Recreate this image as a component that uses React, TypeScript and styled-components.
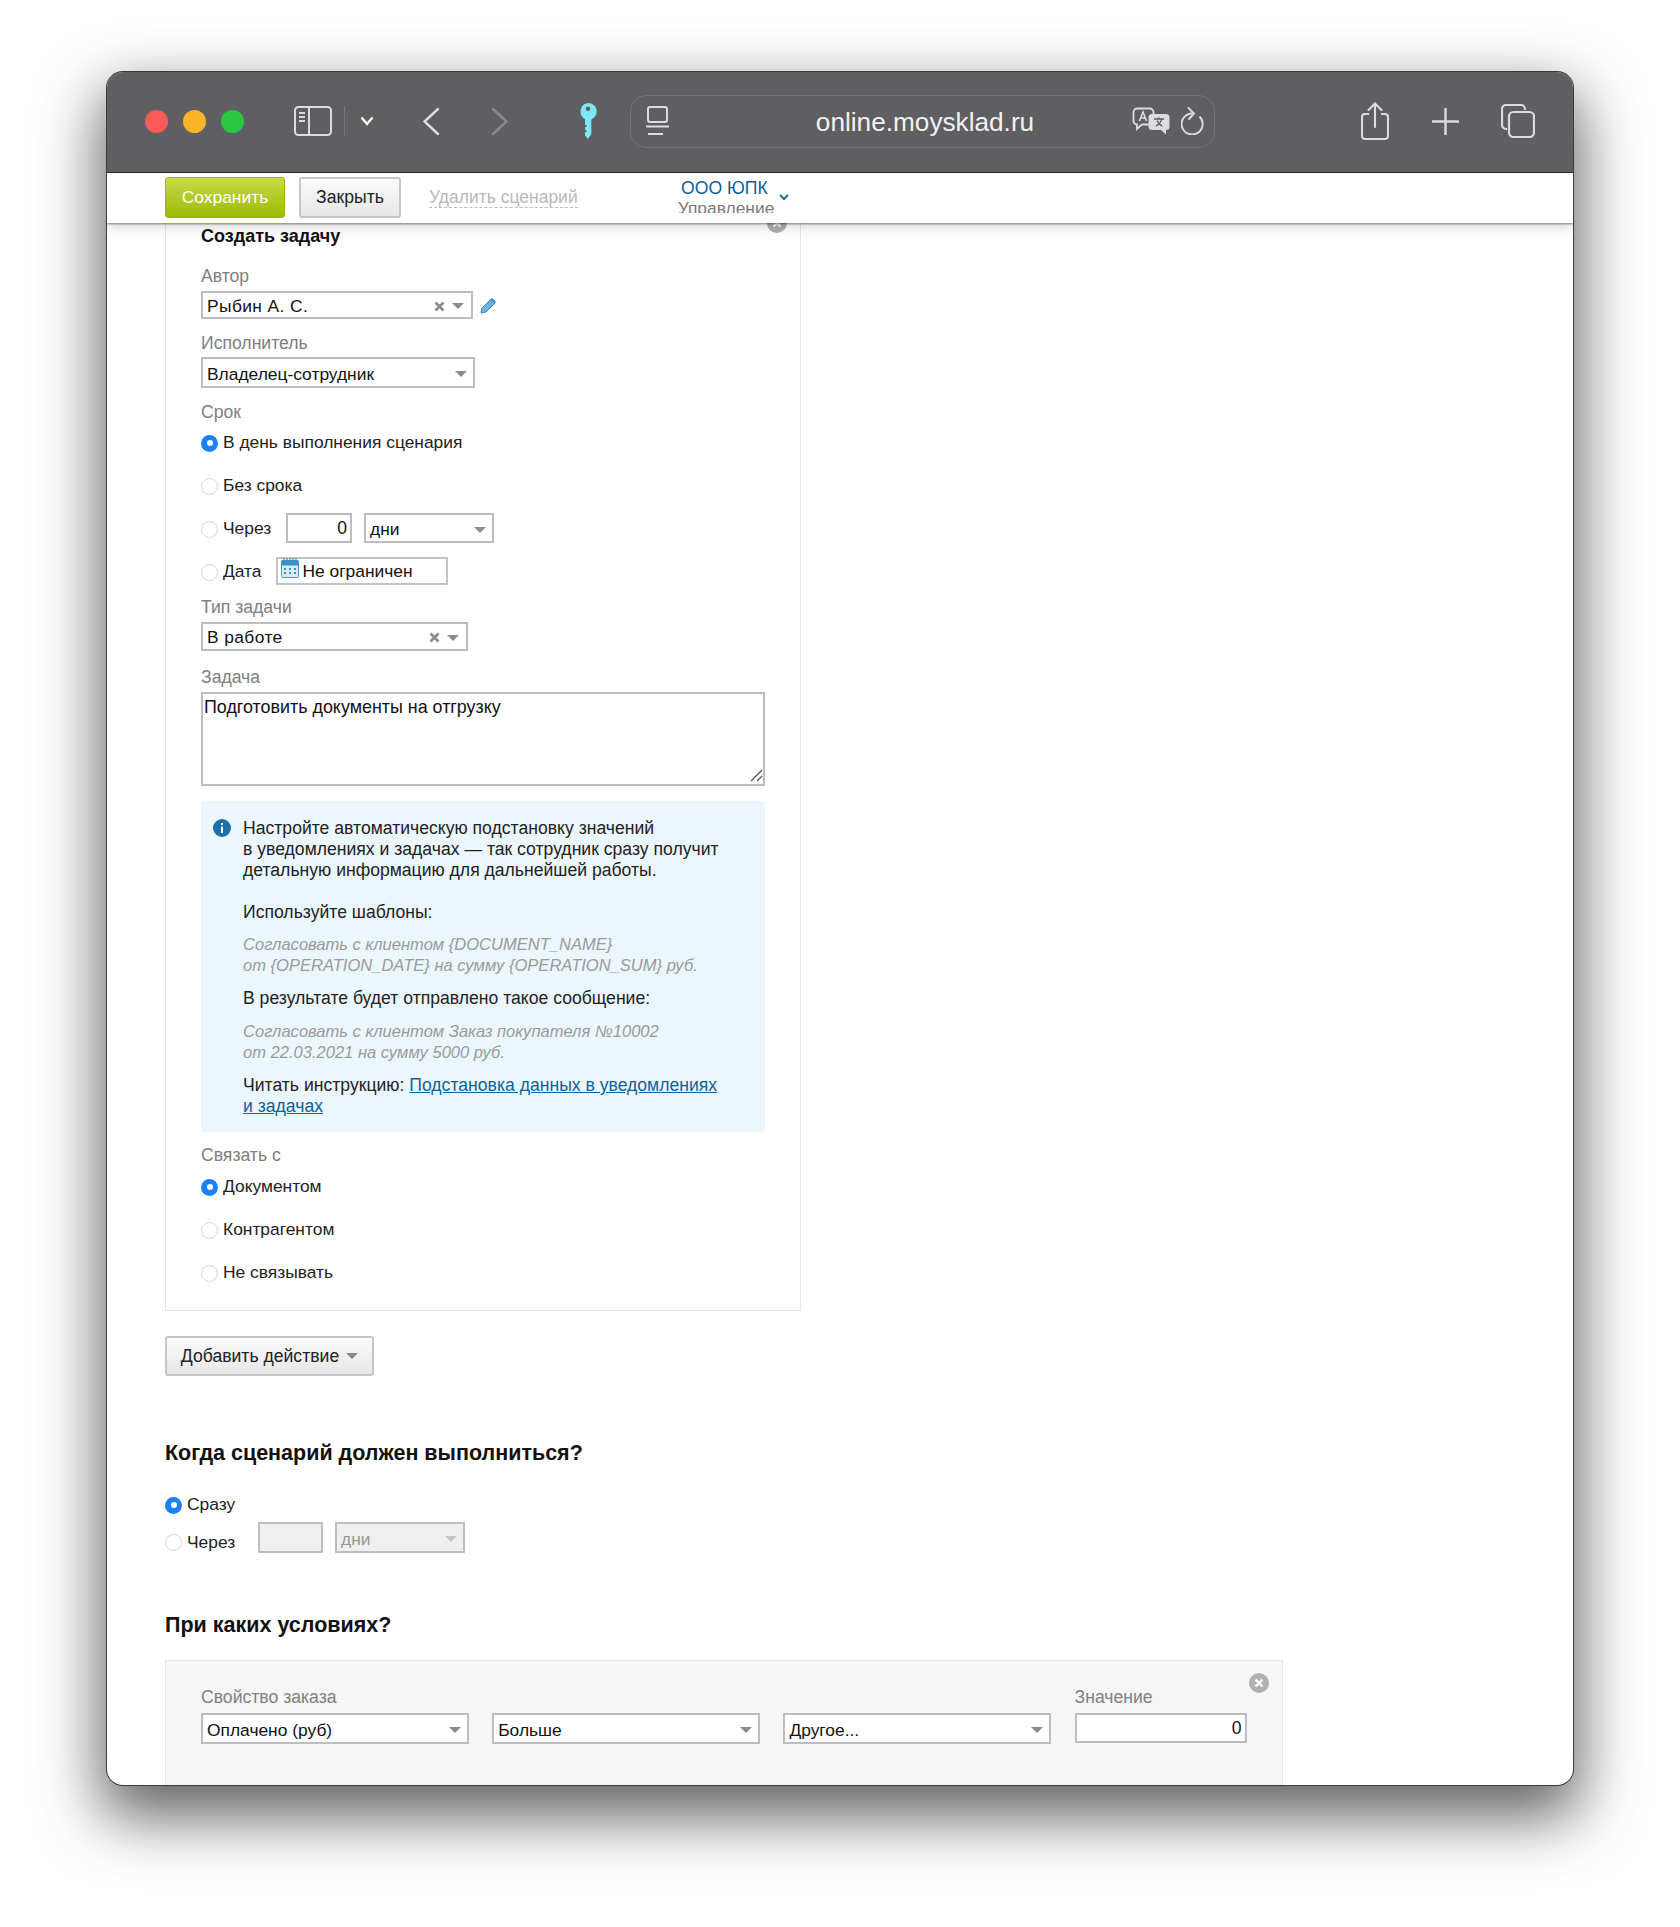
import React from 'react';
import styled, { createGlobalStyle } from 'styled-components';

const GlobalStyle = createGlobalStyle`
  html, body {
    margin: 0;
    background: #fff;
  }
  body {
    font-family: "Liberation Sans", Arial, sans-serif;
    font-size: 17.4px;
    color: #222;
  }
  * {
    box-sizing: border-box;
  }
`;

const Stage = styled('div')`
  width: 1680px;
  height: 1927px;
  padding: 72px 107px 0;
  overflow: hidden;
`;

const Browser = styled('div')`
  width: 1466px;
  height: 1713px;
  border-radius: 16px;
  overflow: hidden;
  display: flex;
  flex-direction: column;
  background: #fff;
  box-shadow: 0 0 0 1px #3a3a3a, 0 26px 62px 6px rgba(0, 0, 0, 0.62);
`;

const TitleBar = styled('div')`
  height: 101px;
  flex: 0 0 auto;
  display: flex;
  align-items: center;
  padding: 0 36px 2px 38px;
  background: #5f5f62;
  border-bottom: 1px solid #2e2e30;
`;

const Light = styled('span')<{ $color: string }>`
  width: 23px;
  height: 23px;
  border-radius: 50%;
  margin-right: 15px;
  background: ${(p) => p.$color};
`;

const ToolIcon = styled('svg')<{ $left: number }>`
  flex: 0 0 auto;
  display: block;
  margin-left: ${(p) => p.$left}px;
  color: #dcdcde;
`;

const Divider = styled('span')`
  width: 1px;
  height: 30px;
  margin-left: 12px;
  background: #77777a;
`;

const AddressBar = styled('div')`
  width: 585px;
  height: 53px;
  margin-left: 33px;
  display: flex;
  align-items: center;
  padding: 0 9px 0 14px;
  border: 1px solid #737376;
  border-radius: 16px;
`;

const Url = styled('div')`
  flex: 1;
  padding: 2px 0 0 48px;
  text-align: center;
  font-size: 26.2px;
  color: #f2f2f2;
`;

const ActionBar = styled('div')`
  position: relative;
  z-index: 2;
  height: 50px;
  flex: 0 0 auto;
  display: flex;
  align-items: center;
  padding: 0 0 1px 58px;
  background: #fff;
  box-shadow: 0 1px 2px rgba(0, 0, 0, 0.45), 0 4px 12px rgba(0, 0, 0, 0.16);
`;

const SaveButton = styled('button')`
  width: 120px;
  height: 41px;
  padding: 0;
  border: 1px solid #9db40f;
  border-radius: 3px;
  background: linear-gradient(#c5da4a, #9fba05);
  color: #fff;
  font: 17.4px "Liberation Sans", Arial, sans-serif;
`;

const GreyButton = styled('button')<{ $w: number; $ml: number; $h: number; $mt?: number }>`
  width: ${(p) => p.$w}px;
  height: ${(p) => p.$h}px;
  margin: ${(p) => p.$mt || 0}px 0 0 ${(p) => p.$ml}px;
  padding: 0;
  display: flex;
  align-items: center;
  justify-content: center;
  gap: 7px;
  border: 2px solid #c6c6c6;
  border-radius: 3px;
  background: linear-gradient(#fbfbfb, #e7e7e7);
  color: #222;
  font: 17.6px "Liberation Sans", Arial, sans-serif;
`;

const DashedLink = styled('span')`
  margin-left: 28px;
  color: #b9b9b9;
  font-size: 17.5px;
  line-height: 20px;
  border-bottom: 1px dashed #bbb;
`;

const Account = styled('div')`
  position: relative;
  align-self: flex-start;
  width: 111px;
  height: 40px;
  margin-left: 100px;
  padding-top: 5px;
  overflow: hidden;
  text-align: right;
  line-height: 20px;
`;

const AccountName = styled('div')`
  padding-right: 21px;
  color: #0d5f96;
  font-size: 17.6px;
`;

const AccountSub = styled('div')`
  padding-right: 21px;
  color: #7a7a7a;
  font-size: 17.4px;
`;

const Caret = styled('span')<{ $color?: string }>`
  display: inline-block;
  flex: 0 0 auto;
  width: 0;
  height: 0;
  border-left: 6px solid transparent;
  border-right: 6px solid transparent;
  border-top: 6px solid ${(p) => p.$color || '#8b8b8b'};
`;

const AccountCaret = styled('svg')`
  position: absolute;
  right: 0;
  top: 21px;
`;

const Content = styled('div')`
  flex: 1;
  min-height: 0;
  overflow: hidden;
  padding-left: 58px;
`;

const Panel = styled('div')`
  position: relative;
  width: 636px;
  height: 1088px;
  padding: 3px 35px 0;
  border: 1px solid #e6e6e6;
  border-top: none;
`;

const CloseBadge = styled('span')<{ $top: number; $right: number }>`
  position: absolute;
  right: ${(p) => p.$right}px;
  top: ${(p) => p.$top}px;
  width: 20px;
  height: 20px;
  border-radius: 50%;
  background: #b0b0b0;
  display: flex;
  align-items: center;
  justify-content: center;
`;

const PanelTitle = styled('div')`
  font-size: 18px;
  font-weight: bold;
  line-height: 20px;
  color: #111;
`;

const Label = styled('div')<{ $mt: number }>`
  margin-top: ${(p) => p.$mt}px;
  line-height: 20px;
  font-size: 17.6px;
  color: #808080;
`;

const Inline = styled('div')<{ $mt: number; $gap?: number }>`
  display: flex;
  align-items: center;
  margin-top: ${(p) => p.$mt}px;
  gap: ${(p) => p.$gap || 0}px;
`;

const Select = styled('div')<{ $w: number; $h: number; $ml?: number; $disabled?: boolean; $spaced?: boolean }>`
  width: ${(p) => p.$w}px;
  height: ${(p) => p.$h}px;
  margin-left: ${(p) => p.$ml || 0}px;
  flex: 0 0 auto;
  display: flex;
  align-items: center;
  padding: ${(p) => (p.$spaced ? '2px 7px 0 4px' : '3px 6px 0 4px')};
  border: 2px solid #bdbdbd;
  background: ${(p) => (p.$disabled ? '#efefef' : '#fff')};
  color: ${(p) => (p.$disabled ? '#999' : '#111')};
  font-size: 17.4px;
  letter-spacing: ${(p) => (p.$spaced ? '0.4px' : '0')};
`;

const SelectValue = styled('span')`
  flex: 1;
  white-space: nowrap;
`;

const ClearIcon = styled('svg')`
  margin-right: 7px;
  flex: 0 0 auto;
`;

const NumberBox = styled('div')<{ $w: number; $h: number; $disabled?: boolean }>`
  width: ${(p) => p.$w}px;
  height: ${(p) => p.$h}px;
  flex: 0 0 auto;
  padding: 0 3px;
  border: 2px solid #bdbdbd;
  background: ${(p) => (p.$disabled ? '#efefef' : '#fff')};
  text-align: right;
  font-size: 17.6px;
  line-height: 26px;
  color: #111;
`;

const DateBox = styled('div')`
  width: 172px;
  height: 28px;
  margin-left: 14px;
  display: flex;
  align-items: center;
  gap: 4px;
  padding-left: 3px;
  border: 2px solid #c3c3c3;
  font-size: 17.4px;
  color: #111;
`;

const RadioRow = styled('div')<{ $mt: number; $w?: number }>`
  display: flex;
  align-items: center;
  height: 20px;
  margin-top: ${(p) => p.$mt}px;
  line-height: 20px;
  font-size: 17.4px;
  color: #222;
  width: ${(p) => (p.$w ? `${p.$w}px` : 'auto')};
  flex: 0 0 auto;
  box-sizing: content-box;
`;

const Radio = styled('span')<{ $checked?: boolean }>`
  width: 17px;
  height: 17px;
  margin: 2px 5px 0 0;
  flex: 0 0 auto;
  border-radius: 50%;
  background: ${(p) => (p.$checked ? '#1b82fb' : '#fff')};
  border: ${(p) => (p.$checked ? 'none' : '1px solid #d4d4d4')};
  display: flex;
  align-items: center;
  justify-content: center;
  &::after {
    content: '';
    display: ${(p) => (p.$checked ? 'block' : 'none')};
    width: 6px;
    height: 6px;
    border-radius: 50%;
    background: #fff;
  }
`;

const TaskWrap = styled('div')`
  position: relative;
  width: 564px;
  height: 94px;
  margin-top: 5px;
`;

const TaskText = styled('textarea')`
  display: block;
  width: 100%;
  height: 100%;
  margin: 0;
  padding: 3px 1px;
  border: 2px solid #bdbdbd;
  border-radius: 0;
  outline: none;
  font: 17.9px/20px "Liberation Sans", Arial, sans-serif;
  color: #111;
  resize: none;
`;

const ResizeGrip = styled('svg')`
  position: absolute;
  right: 2px;
  bottom: 4px;
`;

const InfoBox = styled('div')`
  position: relative;
  width: 564px;
  height: 331px;
  margin-top: 15px;
  padding: 17px 20px 0 42px;
  background: #ecf7fd;
  border-radius: 3px;
  font-size: 17.6px;
  line-height: 21px;
  color: #222;
`;

const InfoIcon = styled('svg')`
  position: absolute;
  left: 12px;
  top: 18px;
`;

const InfoText = styled('div')<{ $mt?: number; $muted?: boolean }>`
  margin-top: ${(p) => p.$mt || 0}px;
  white-space: nowrap;
  color: ${(p) => (p.$muted ? '#9a9a9a' : '#222')};
  font-style: ${(p) => (p.$muted ? 'italic' : 'normal')};
  font-size: ${(p) => (p.$muted ? '16.55px' : '17.6px')};
`;

const InfoLink = styled('a')`
  color: #0f6299;
  text-decoration: underline;
`;

const SectionTitle = styled('div')<{ $mt: number }>`
  margin-top: ${(p) => p.$mt}px;
  font-size: 21.5px;
  font-weight: bold;
  line-height: 26px;
  color: #111;
`;

const ConditionPanel = styled('div')`
  position: relative;
  width: 1118px;
  height: 200px;
  margin-top: 22px;
  padding: 26px 35px 0;
  background: #f6f6f6;
  border: 1px solid #e6e6e6;
`;

const ConditionGrid = styled('div')`
  display: grid;
  grid-template-columns: 268px 268px 268px 172px;
  column-gap: 23.2px;
  row-gap: 6px;
`;

const ConditionLabel = styled('div')`
  line-height: 20px;
  font-size: 17.6px;
  color: #808080;
`;

const CloseMark = () => (
  <svg width="10" height="10" viewBox="0 0 10 10">
    <path d="M1.5 1.5l7 7M8.5 1.5l-7 7" stroke="#fff" strokeWidth="2.4" />
  </svg>
);

const Clear = () => (
  <ClearIcon width="11" height="11" viewBox="0 0 11 11">
    <path d="M1.5 1.5l8 8M9.5 1.5l-8 8" stroke="#8b8b8b" strokeWidth="2.6" />
  </ClearIcon>
);

const SidebarIcon = () => (
  <ToolIcon $left={35} width="38" height="30" viewBox="0 0 38 30" fill="none" stroke="currentColor" strokeWidth="2">
    <rect x="1" y="1" width="36" height="28" rx="3.5" />
    <path d="M15 1v28" />
    <path d="M5 7h6M5 11h6M5 15h6" strokeWidth="1.8" />
  </ToolIcon>
);

const SmallChevron = () => (
  <ToolIcon $left={15} width="14" height="10" viewBox="0 0 14 10" fill="none" stroke="#fff" strokeWidth="2.4">
    <path d="M1.5 1.5L7 8l5.5-6.5" />
  </ToolIcon>
);

const BackIcon = () => (
  <ToolIcon $left={48} width="18" height="29" viewBox="0 0 18 29" fill="none" stroke="currentColor" strokeWidth="2.4" strokeLinecap="round">
    <path d="M16 2L2.5 14.5 16 27" />
  </ToolIcon>
);

const ForwardIcon = () => (
  <ToolIcon $left={51} width="18" height="29" viewBox="0 0 18 29" fill="none" stroke="#8a8a8d" strokeWidth="2.4" strokeLinecap="round">
    <path d="M2 2l13.5 12.5L2 27" />
  </ToolIcon>
);

const KeyIcon = () => (
  <ToolIcon $left={70} width="18" height="37" viewBox="0 0 18 37">
    <path
      fillRule="evenodd"
      fill="#7fe8f6"
      d="M9 0a8.5 8.5 0 0 1 3.3 16.4V31L9 36l-3-3.5v-3l2-1.5-2-1.5v-2l2-1.5-2-1.5v-5.6A8.5 8.5 0 0 1 9 0zm0 3.4a2.3 2.3 0 1 0 0 4.6 2.3 2.3 0 0 0 0-4.6z"
    />
  </ToolIcon>
);

const PageIcon = () => (
  <ToolIcon $left={0} width="25" height="30" viewBox="0 0 25 30" fill="none" stroke="currentColor" strokeWidth="2">
    <rect x="3" y="1" width="19" height="15" rx="2" />
    <path d="M1 20.5h23M3 28h15" />
  </ToolIcon>
);

const TranslateIcon = () => (
  <ToolIcon $left={0} width="38" height="28" viewBox="0 0 38 28">
    <path fill="none" stroke="#dcdcde" strokeWidth="1.8" d="M5 1.5h13a3.5 3.5 0 0 1 3.5 3.5v9a3.5 3.5 0 0 1-3.5 3.5H10L5 22v-4.5A3.5 3.5 0 0 1 1.5 14V5A3.5 3.5 0 0 1 5 1.5z" />
    <path fill="none" stroke="#dcdcde" strokeWidth="1.6" d="M7.5 14l3.5-9 3.5 9M9 11h5" />
    <path fill="#dcdcde" d="M20 7h14a3.5 3.5 0 0 1 3.5 3.5v9A3.5 3.5 0 0 1 34 23v4.5L29 23h-9a3.5 3.5 0 0 1-3.5-3.5v-9A3.5 3.5 0 0 1 20 7z" />
    <path fill="none" stroke="#5f5f62" strokeWidth="1.4" d="M22 12h10M27 10.5V12M24 19c3-1.5 5-4 5.5-7M30 19c-2-1-4-3-5-5.5" />
  </ToolIcon>
);

const ReloadIcon = () => (
  <ToolIcon $left={11} width="24" height="28" viewBox="0 0 24 28" fill="none" stroke="currentColor" strokeWidth="1.9">
    <path d="M18.5 9.5a10.5 10.5 0 1 1-7-3" />
    <path d="M7.5 1l5.5 5.5-5 5.5" strokeLinecap="round" />
  </ToolIcon>
);

const ShareIcon = () => (
  <ToolIcon $left={146} width="28" height="38" viewBox="0 0 28 38" fill="none" stroke="currentColor" strokeWidth="2.1">
    <path d="M8 12H4a3 3 0 0 0-3 3v19a3 3 0 0 0 3 3h20a3 3 0 0 0 3-3V15a3 3 0 0 0-3-3h-4" />
    <path d="M14 25V2M7.5 8L14 1.5 20.5 8" strokeLinecap="round" />
  </ToolIcon>
);

const PlusIcon = () => (
  <ToolIcon $left={43} width="27" height="27" viewBox="0 0 27 27" fill="none" stroke="currentColor" strokeWidth="2.4">
    <path d="M13.5 0v27M0 13.5h27" />
  </ToolIcon>
);

const TabsIcon = () => (
  <ToolIcon $left={42} width="34" height="34" viewBox="0 0 34 34" fill="none" stroke="currentColor" strokeWidth="2.2">
    <path d="M6 25H5a4 4 0 0 1-4-4V5a4 4 0 0 1 4-4h15a4 4 0 0 1 4 4v1" />
    <rect x="8" y="8" width="25" height="25" rx="4.5" />
  </ToolIcon>
);

const PencilIcon = () => (
  <svg width="17" height="17" viewBox="0 0 17 17">
    <path d="M1 16l1-5L11 2l4 4-9 9z" fill="#6fb1e4" stroke="#3f86bd" strokeWidth="1" />
    <path d="M12 1l4 4-1.5 1.5-4-4z" fill="#3f86bd" />
  </svg>
);

const CalendarSvg = styled('svg')`
  margin-top: -6px;
  flex: 0 0 auto;
`;

const CalendarIcon = () => (
  <CalendarSvg width="18" height="20" viewBox="0 0 18 20">
    <rect x="0.5" y="2.5" width="17" height="17" rx="1" fill="#d8ebf7" stroke="#4a97c8" />
    <rect x="0.5" y="2.5" width="17" height="5" fill="#3d8fc4" />
    <path d="M3 0v4M6 0v4M9 0v4M12 0v4M15 0v4" stroke="#3d8fc4" strokeWidth="1.2" />
    <path d="M3 10h2v2H3zM8 10h2v2H8zM13 10h2v2h-2zM3 14h2v2H3zM8 14h2v2H8zM13 14h2v2h-2z" fill="#3d8fc4" />
  </CalendarSvg>
);

const App: React.FunctionComponent = () => {
  return (
    <Stage>
      <GlobalStyle />
      <Browser>
        <TitleBar>
          <Light $color="#fb5b58" />
          <Light $color="#fdb42d" />
          <Light $color="#29c840" />
          <SidebarIcon />
          <Divider />
          <SmallChevron />
          <BackIcon />
          <ForwardIcon />
          <KeyIcon />
          <AddressBar>
            <PageIcon />
            <Url>online.moysklad.ru</Url>
            <TranslateIcon />
            <ReloadIcon />
          </AddressBar>
          <ShareIcon />
          <PlusIcon />
          <TabsIcon />
        </TitleBar>

        <ActionBar>
          <SaveButton>Сохранить</SaveButton>
          <GreyButton $w={102} $h={41} $ml={14}>Закрыть</GreyButton>
          <DashedLink>Удалить сценарий</DashedLink>
          <Account>
            <AccountName>ООО ЮПК</AccountName>
            <AccountSub>Управление</AccountSub>
            <AccountCaret width="10" height="7" viewBox="0 0 10 7" fill="none" stroke="#1a6fa8" strokeWidth="2">
              <path d="M1 1l4 4 4-4" />
            </AccountCaret>
          </Account>
        </ActionBar>

        <Content>
          <Panel>
            <CloseBadge $top={-10} $right={13}><CloseMark /></CloseBadge>
            <PanelTitle>Создать задачу</PanelTitle>

            <Label $mt={20}>Автор</Label>
            <Inline $mt={5} $gap={7}>
              <Select $w={272} $h={28} $spaced>
                <SelectValue>Рыбин А. С.</SelectValue>
                <Clear />
                <Caret />
              </Select>
              <PencilIcon />
            </Inline>

            <Label $mt={14}>Исполнитель</Label>
            <Inline $mt={4}>
              <Select $w={274} $h={31}>
                <SelectValue>Владелец-сотрудник</SelectValue>
                <Caret />
              </Select>
            </Inline>

            <Label $mt={14}>Срок</Label>
            <RadioRow $mt={10}><Radio $checked />В день выполнения сценария</RadioRow>
            <RadioRow $mt={23}><Radio />Без срока</RadioRow>
            <Inline $mt={18}>
              <RadioRow $mt={0} $w={85}><Radio />Через</RadioRow>
              <NumberBox $w={66} $h={30}>0</NumberBox>
              <Select $w={130} $h={30} $ml={12}>
                <SelectValue>дни</SelectValue>
                <Caret />
              </Select>
            </Inline>
            <Inline $mt={14}>
              <RadioRow $mt={0}><Radio />Дата</RadioRow>
              <DateBox><CalendarIcon />Не ограничен</DateBox>
            </Inline>

            <Label $mt={12}>Тип задачи</Label>
            <Inline $mt={5}>
              <Select $w={267} $h={29} $spaced>
                <SelectValue>В работе</SelectValue>
                <Clear />
                <Caret />
              </Select>
            </Inline>

            <Label $mt={16}>Задача</Label>
            <TaskWrap>
              <TaskText readOnly defaultValue="Подготовить документы на отгрузку" />
              <ResizeGrip width="13" height="13" viewBox="0 0 13 13" fill="none" stroke="#555" strokeWidth="1.3">
                <path d="M1 12L12 1M7 12l5-5" />
              </ResizeGrip>
            </TaskWrap>

            <InfoBox>
              <InfoIcon width="18" height="18" viewBox="0 0 18 18">
                <circle cx="9" cy="9" r="9" fill="#1d6fa8" />
                <path d="M8 4h2v2H8zM8 7.5h2V14H8z" fill="#fff" />
              </InfoIcon>
              <InfoText>
                Настройте автоматическую подстановку значений
                <br />в уведомлениях и задачах — так сотрудник сразу получит
                <br />детальную информацию для дальнейшей работы.
              </InfoText>
              <InfoText $mt={21}>Используйте шаблоны:</InfoText>
              <InfoText $mt={11} $muted>
                Согласовать с клиентом {'{DOCUMENT_NAME}'}
                <br />от {'{OPERATION_DATE}'} на сумму {'{OPERATION_SUM}'} руб.
              </InfoText>
              <InfoText $mt={12}>В результате будет отправлено такое сообщение:</InfoText>
              <InfoText $mt={12} $muted>
                Согласовать с клиентом Заказ покупателя №10002
                <br />от 22.03.2021 на сумму 5000 руб.
              </InfoText>
              <InfoText $mt={12}>
                Читать инструкцию: <InfoLink>Подстановка данных в уведомлениях</InfoLink>
                <br /><InfoLink>и задачах</InfoLink>
              </InfoText>
            </InfoBox>

            <Label $mt={13}>Связать с</Label>
            <RadioRow $mt={11}><Radio $checked />Документом</RadioRow>
            <RadioRow $mt={23}><Radio />Контрагентом</RadioRow>
            <RadioRow $mt={23}><Radio />Не связывать</RadioRow>
          </Panel>

          <GreyButton $w={209} $h={40} $ml={0} $mt={25}>
            Добавить действие
            <Caret />
          </GreyButton>

          <SectionTitle $mt={64}>Когда сценарий должен выполниться?</SectionTitle>
          <RadioRow $mt={28}><Radio $checked />Сразу</RadioRow>
          <Inline $mt={8}>
            <RadioRow $mt={8} $w={93}><Radio />Через</RadioRow>
            <NumberBox $w={65} $h={31} $disabled />
            <Select $w={130} $h={31} $ml={12} $disabled>
              <SelectValue>дни</SelectValue>
              <Caret $color="#c4c4c4" />
            </Select>
          </Inline>

          <SectionTitle $mt={59}>При каких условиях?</SectionTitle>
          <ConditionPanel>
            <CloseBadge $top={12} $right={13}><CloseMark /></CloseBadge>
            <ConditionGrid>
              <ConditionLabel>Свойство заказа</ConditionLabel>
              <span />
              <span />
              <ConditionLabel>Значение</ConditionLabel>
              <Select $w={268} $h={31}>
                <SelectValue>Оплачено (руб)</SelectValue>
                <Caret />
              </Select>
              <Select $w={268} $h={31}>
                <SelectValue>Больше</SelectValue>
                <Caret />
              </Select>
              <Select $w={268} $h={31}>
                <SelectValue>Другое...</SelectValue>
                <Caret />
              </Select>
              <NumberBox $w={172} $h={30}>0</NumberBox>
            </ConditionGrid>
          </ConditionPanel>
        </Content>
      </Browser>
    </Stage>
  );
};

export default App;
